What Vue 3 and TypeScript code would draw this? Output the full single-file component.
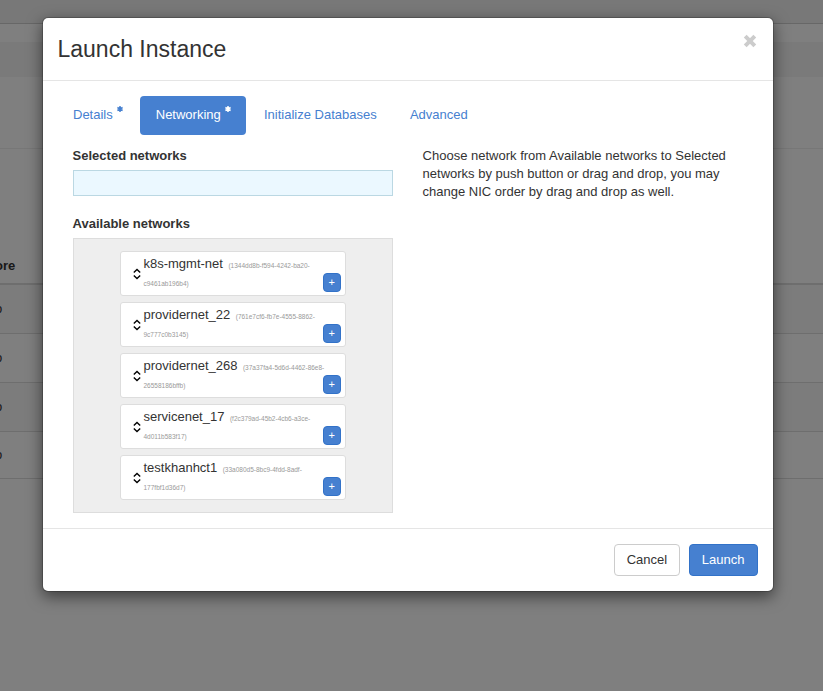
<script setup lang="ts">
import { ref } from 'vue'

interface Network {
  name: string
  id: [string, string]
}

interface Tab {
  label: string
  required: boolean
}

const tabs: Tab[] = [
  { label: 'Details', required: true },
  { label: 'Networking', required: true },
  { label: 'Initialize Databases', required: false },
  { label: 'Advanced', required: false },
]
const activeTab = ref('Networking')

const networks: Network[] = [
  { name: 'k8s-mgmt-net', id: ['(1344dd8b-f594-4242-ba20-', 'c9461ab196b4)'] },
  { name: 'providernet_22', id: ['(761e7cf6-fb7e-4555-8862-', '9c777c0b3145)'] },
  { name: 'providernet_268', id: ['(37a37fa4-5d6d-4462-86e8-', '26558186bffb)'] },
  { name: 'servicenet_17', id: ['(f2c379ad-45b2-4cb6-a3ce-', '4d011b583f17)'] },
  { name: 'testkhanhct1', id: ['(33a080d5-8bc9-4fdd-8adf-', '177fbf1d36d7)'] },
]
</script>

<template>
  <div class="screen">
    <div class="page">
      <div class="topbar"></div>
      <div class="spacer"></div>
      <div class="breadcrumb"></div>
      <div class="heading"></div>
      <div class="table-head"><span>ore</span></div>
      <div v-for="n in 4" :key="n" class="table-row"><span>o</span></div>
    </div>

    <div class="backdrop">
      <div class="modal">
        <header class="modal-header">
          <h3>Launch Instance</h3>
          <button class="close" aria-label="Close">
            <svg width="14" height="14" viewBox="0 0 14 14">
              <path d="M2.2 2.2 11.8 11.8M11.8 2.2 2.2 11.8" />
            </svg>
          </button>
        </header>

        <div class="modal-body">
          <nav class="tabs">
            <a
              v-for="tab in tabs"
              :key="tab.label"
              :class="{ active: tab.label === activeTab }"
              @click="activeTab = tab.label"
            >
              <span>{{ tab.label }}</span>
              <svg v-if="tab.required" width="6" height="6" viewBox="0 0 6 6">
                <path d="M3 0V6M.4 1.5 5.6 4.5M5.6 1.5.4 4.5" />
              </svg>
            </a>
          </nav>

          <div class="columns">
            <section class="lists">
              <h4>Selected networks</h4>
              <div class="selected"></div>
              <h4 class="second">Available networks</h4>
              <ul class="available">
                <li v-for="net in networks" :key="net.name">
                  <svg class="sort" width="8" height="12" viewBox="0 0 8 12">
                    <path d="M.8 4.6 4 1.4 7.2 4.6M.8 7.4 4 10.6 7.2 7.4" />
                  </svg>
                  <div class="info">
                    <div class="line">
                      {{ net.name }}<span class="id first">{{ net.id[0] }}</span>
                    </div>
                    <div class="line"><span class="id">{{ net.id[1] }}</span></div>
                  </div>
                  <button class="add">+</button>
                </li>
              </ul>
            </section>
            <p class="help">
              Choose network from Available networks to Selected networks by push button or drag
              and drop, you may change NIC order by drag and drop as well.
            </p>
          </div>
        </div>

        <footer class="modal-footer">
          <button class="btn">Cancel</button>
          <button class="btn primary">Launch</button>
        </footer>
      </div>
    </div>
  </div>
</template>

<style>
body {
  margin: 0;
  overflow: hidden;
}
</style>

<style scoped>
* {
  box-sizing: border-box;
}
.screen {
  position: relative;
  width: 823px;
  height: 691px;
  overflow: hidden;
  background: #fff;
  color: #333;
  font: 13px/18px 'Liberation Sans', Arial, sans-serif;
}
.topbar {
  height: 24px;
  background: #f1f1f1;
  border-bottom: 1px solid #cfcfcf;
}
.spacer {
  height: 18px;
}
.breadcrumb {
  height: 35px;
  background: #f5f5f5;
}
.heading {
  height: 72px;
  border-bottom: 1px solid #eee;
}
.table-head {
  display: flex;
  align-items: flex-end;
  height: 136px;
  padding-bottom: 8px;
  border-bottom: 2px solid #ddd;
  font-weight: bold;
}
.table-head span {
  margin-left: -5px;
}
.table-row {
  display: flex;
  align-items: center;
  height: 49px;
  border-bottom: 1px solid #ddd;
}
.table-row:nth-last-child(even) {
  background: #f9f9f9;
}
.table-row:last-child {
  height: 47px;
}
.table-row span {
  margin-left: -5px;
}
.backdrop {
  position: absolute;
  inset: 0;
  display: flex;
  justify-content: center;
  align-items: flex-start;
  padding: 17px 7px 0 0;
  background: rgba(0, 0, 0, 0.5);
}
.modal {
  width: 732px;
  height: 575px;
  display: flex;
  flex-direction: column;
  background: #fff;
  background-clip: padding-box;
  border: 1px solid rgba(0, 0, 0, 0.2);
  border-radius: 6px;
  box-shadow: 0 5px 15px rgba(0, 0, 0, 0.5);
}
.modal-header {
  display: flex;
  justify-content: space-between;
  height: 63px;
  padding: 15px 16px 15px 14.5px;
  border-bottom: 1px solid #e5e5e5;
}
h3 {
  margin: 0;
  font-size: 23px;
  font-weight: 400;
  line-height: 32px;
}
button {
  font: inherit;
  color: inherit;
}
.close {
  width: 14px;
  height: 14px;
  margin-top: 1px;
  padding: 0;
  border: 0;
  background: none;
}
svg {
  display: block;
  fill: none;
  stroke: currentColor;
}
.close svg {
  stroke: #ccc;
  stroke-width: 4;
}
.modal-body {
  flex: 1;
  padding: 15px;
}
.tabs {
  display: flex;
  gap: 2px;
  height: 39px;
}
.tabs a {
  display: flex;
  gap: 4px;
  padding: 10px 15.5px 0 15px;
  border-radius: 4px;
  color: #4680d0;
}
.tabs a:nth-child(n + 3) {
  padding-left: 15.7px;
}
.tabs svg {
  stroke-width: 1.5;
}
.tabs .active {
  gap: 4px;
  padding-left: 15.5px;
  background: #4680d0;
  color: #fff;
}
.columns {
  display: flex;
  gap: 30px;
  padding: 12px 15px 0 14.6px;
}
.lists {
  width: 320px;
}
h4 {
  margin: 0 0 5px;
  font-size: 13px;
  line-height: 18px;
}
.selected {
  height: 26px;
  background: #ebf8ff;
  border: 1px solid #bbd8e3;
}
.second {
  margin-top: 19px;
}
.available {
  display: flex;
  flex-direction: column;
  gap: 6px;
  height: 275px;
  margin: 0;
  padding: 12px 46px;
  list-style: none;
  background: #eee;
  border: 1px solid #ddd;
}
.available li {
  display: flex;
  height: 45px;
  padding: 0 4px 0 12.8px;
  background: #fff;
  border: 1px solid #ddd;
  border-radius: 3px;
}
.sort {
  flex: none;
  margin-top: 16px;
  color: #000;
  stroke-width: 1.35;
}
.info {
  flex: 1;
  min-width: 0;
  padding: 3px 0 0 2.1px;
  white-space: nowrap;
}
.line {
  height: 18px;
}
.id {
  font-size: 6.5px;
  color: #999;
}
.id.first {
  margin-left: 5.5px;
}
.add {
  flex: none;
  width: 18px;
  height: 19px;
  margin-top: 21px;
  padding: 0;
  border: 1px solid #3272c8;
  border-radius: 4px;
  background: #4680d0;
  color: #fff;
  font-size: 11px;
  line-height: 15px;
  text-align: center;
}
.help {
  width: 310px;
  margin: 0;
}
.modal-footer {
  display: flex;
  justify-content: flex-end;
  gap: 9px;
  height: 63px;
  padding: 15px;
  border-top: 1px solid #e5e5e5;
}
.btn {
  height: 32px;
  padding: 0 12.2px 0 11.8px;
  border: 1px solid #ccc;
  border-radius: 4px;
  background: #fff;
}
.primary {
  padding: 0 12.5px 0 11.5px;
  border-color: #3272c8;
  background: #4680d0;
  color: #fff;
}
</style>
